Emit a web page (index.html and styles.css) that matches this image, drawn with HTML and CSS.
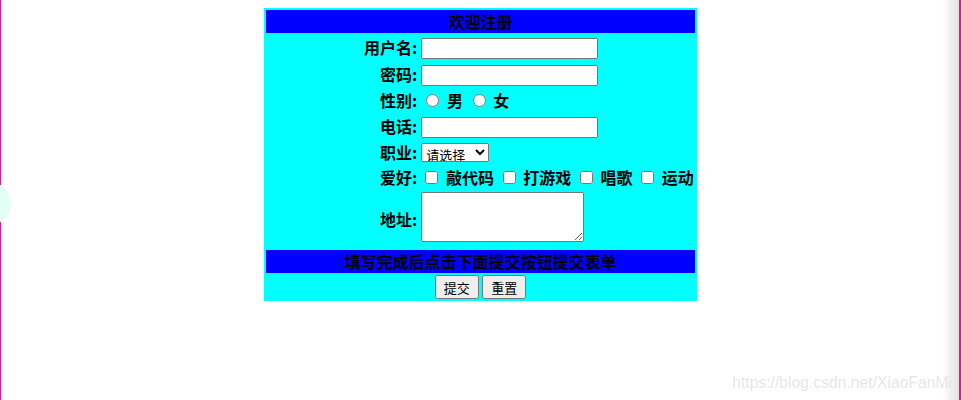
FILE: index.html
```html
<!DOCTYPE html>
<html lang="zh-CN">
<head>
<meta charset="utf-8">
<title>欢迎注册</title>
<link rel="stylesheet" href="styles.css">
</head>
<body>
<form class="reg-form">
<table class="reg-table">
  <tr><th colspan="2" class="bar">欢迎注册</th></tr>
  <tr><td class="lbl">用户名:</td><td class="fld"><input type="text" class="txt"></td></tr>
  <tr><td class="lbl">密码:</td><td class="fld"><input type="password" class="txt"></td></tr>
  <tr><td class="lbl">性别:</td><td class="fld"><input type="radio" name="sex" class="rad"> 男 <input type="radio" name="sex" class="rad"> 女</td></tr>
  <tr><td class="lbl">电话:</td><td class="fld"><input type="text" class="txt"></td></tr>
  <tr><td class="lbl">职业:</td><td class="fld"><select class="sel"><option>请选择</option></select></td></tr>
  <tr><td class="lbl">爱好:</td><td class="fld"><input type="checkbox" class="chk"> 敲代码 <input type="checkbox" class="chk"> 打游戏 <input type="checkbox" class="chk"> 唱歌 <input type="checkbox" class="chk"> 运动</td></tr>
  <tr><td class="lbl">地址:</td><td class="fld"><textarea class="area"></textarea></td></tr>
  <tr><th colspan="2" class="bar bar-foot">填写完成后点击下面提交按钮提交表单</th></tr>
  <tr><td colspan="2" class="btns"><button type="submit" class="btn">提交</button> <button type="reset" class="btn">重置</button></td></tr>
</table>
</form>
<div class="frame"></div>
<div class="float-ball"></div>
<div class="watermark">https://blog.csdn.net/XiaoFanMi</div>
</body>
</html>
```

FILE: styles.css
```css
html, body {
  background: #ffffff;
}
body {
  margin: 8px;
  font-family: "Noto Sans CJK SC", "Noto Sans", sans-serif;
}
.reg-form {
  margin: 0;
}
.reg-table {
  margin: 0 auto;
  background: #00ffff;
  border-spacing: 2px;
  font-size: 16px;
  font-weight: bold;
  color: #000;
}
.reg-table td, .reg-table th {
  padding: 1px;
  line-height: 21px;
}
.bar {
  background: #0000ff;
  text-align: center;
  color: #000;
}
.lbl {
  text-align: right;
  width: 150px;
}
.fld {
  text-align: left;
  word-spacing: 1px;
}
.txt {
  width: 177px;
  height: 21px;
  box-sizing: border-box;
  margin: 0;
  vertical-align: middle;
  font: 13px "Noto Sans CJK SC", sans-serif;
}
.sel {
  font: 13px "Noto Sans CJK SC", sans-serif;
  height: 19px;
  width: 68px;
  padding: 0;
  margin: 0;
  vertical-align: top;
  margin-top: 1px;
}
.rad {
  margin: 3px 3px 0 5px;
  vertical-align: baseline;
}
.chk {
  margin: 3px 3px 3px 4px;
  vertical-align: baseline;
}
.area {
  width: 163px;
  height: 50px;
  box-sizing: border-box;
  vertical-align: baseline;
  margin: 0 0 1px 0;
}
.reg-table .btns {
  text-align: center;
  padding: 0 1px;
}
.btn {
  font: 13px "Noto Sans CJK SC", sans-serif;
  height: 24px;
  padding: 0 7px;
  margin: 0;
  vertical-align: top;
}
.frame {
  position: fixed;
  inset: 0;
  border-left: 1px solid #e0139b;
  border-right: 2px solid #e0139b;
  pointer-events: none;
}
.frame::after {
  content: "";
  position: absolute;
  top: 0;
  bottom: 0;
  right: 0;
  width: 16px;
  background: linear-gradient(to right, rgba(0,0,0,0), rgba(0,0,0,0.12));
}
.float-ball {
  position: fixed;
  left: -32px;
  top: 182px;
  width: 43px;
  height: 43px;
  border-radius: 50%;
  background: #e2fff6;
}
.watermark {
  position: fixed;
  right: 9px;
  bottom: 8px;
  font: 15.7px "Liberation Sans", Arial, sans-serif;
  color: #e6e6e6;
}
```
